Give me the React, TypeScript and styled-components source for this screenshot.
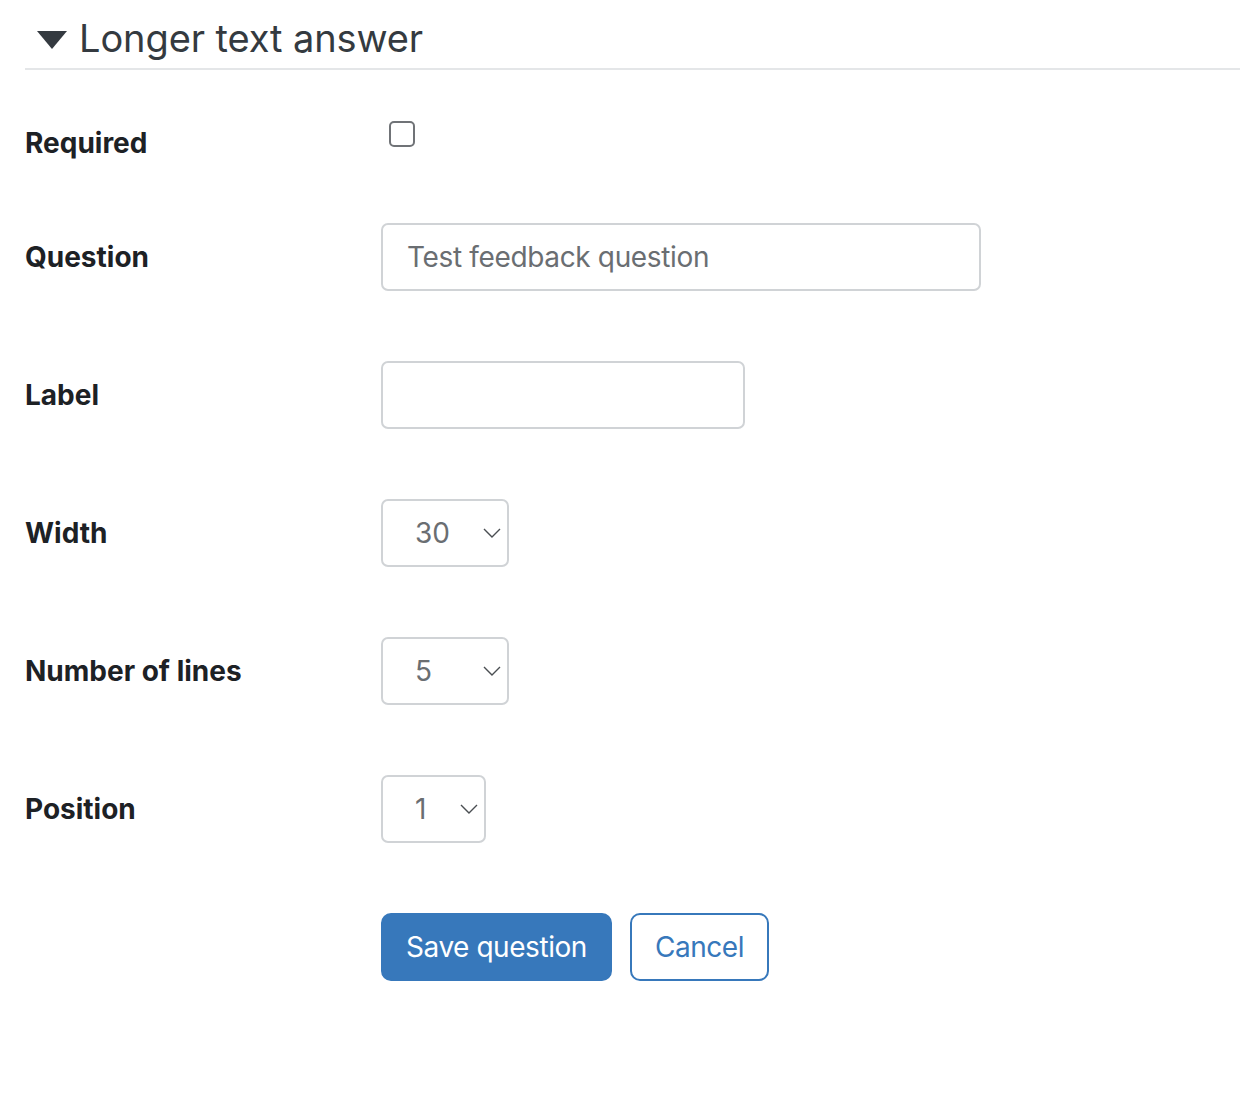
import styled, { createGlobalStyle } from "styled-components";

const GlobalStyle = createGlobalStyle`
  html, body {
    margin: 0;
    padding: 0;
    background: #fff;
  }
  body {
    font-family: Inter, Roboto, "Liberation Sans", sans-serif;
    color: #1d2125;
  }
`;

// ── Layout ────────────────────────────────────────────────

const Page = styled.div`
  padding: 14px 0 0 25px;
  width: 1215px;
`;

const Fieldset = styled.fieldset`
  margin: 0;
  padding: 0;
  border: 0;
`;

const Legend = styled.div`
  display: flex;
  align-items: center;
  gap: 12px;
  padding: 0 0 6px 12px;
  border-bottom: 2px solid #e4e6e8;
  font-size: 38px;
  line-height: 48px;
  letter-spacing: -0.1px;
  color: #343a40;
  font-weight: 400;
`;

const Caret = styled.span`
  width: 0;
  height: 0;
  border-left: 15px solid transparent;
  border-right: 15px solid transparent;
  border-top: 18px solid #343a40;
  margin-top: 4px;
`;

const Rows = styled.div`
  display: flex;
  flex-direction: column;
  padding-top: 51px;
`;

const Row = styled.div<{ $height?: number; $after?: number }>`
  display: grid;
  grid-template-columns: 356px 1fr;
  align-items: center;
  height: ${(p) => p.$height ?? 68}px;
  margin-bottom: ${(p) => p.$after ?? 70}px;
`;

const Label = styled.label`
  font-size: 28px;
  font-weight: 700;
  color: #1d2125;
`;

// ── Controls ──────────────────────────────────────────────

const CheckBox = styled.span`
  display: block;
  align-self: start;
  width: 26px;
  height: 26px;
  margin-left: 8px;
  border: 2px solid #707377;
  border-radius: 5px;
  box-sizing: border-box;
`;

const TextInput = styled.div<{ $width: number }>`
  box-sizing: border-box;
  width: ${(p) => p.$width}px;
  height: 68px;
  border: 2px solid #d0d3d6;
  border-radius: 7px;
  padding: 0 24px;
  display: flex;
  align-items: center;
  font-size: 28px;
  letter-spacing: -0.35px;
  color: #6a6e72;
`;

const Select = styled.div<{ $width: number }>`
  box-sizing: border-box;
  width: ${(p) => p.$width}px;
  height: 68px;
  border: 2px solid #d0d3d6;
  border-radius: 7px;
  padding: 0 6px 0 32px;
  display: flex;
  align-items: center;
  justify-content: space-between;
  font-size: 28px;
  color: #6a6e72;
`;

const Chevron = () => (
  <svg width="18" height="10" viewBox="0 0 18 10" fill="none">
    <path d="M1 1l8 8 8-8" stroke="#4a4e52" strokeWidth="1.4" />
  </svg>
);

const Buttons = styled.div`
  display: flex;
  gap: 18px;
`;

const Button = styled.button<{ $primary?: boolean }>`
  box-sizing: border-box;
  height: 68px;
  padding: 0 23px;
  border-radius: 10px;
  font-family: inherit;
  font-size: 28px;
  letter-spacing: -0.45px;
  border: 2px solid #3778bb;
  background: ${(p) => (p.$primary ? "#3778bb" : "#fff")};
  color: ${(p) => (p.$primary ? "#fff" : "#3778bb")};
`;

// ── Component ─────────────────────────────────────────────

export default function App() {
  return (
    <Page>
      <GlobalStyle />
      <Fieldset>
        <Legend>
          <Caret />
          <span>Longer text answer</span>
        </Legend>
        <Rows>
          <Row $height={44} $after={58}>
            <Label>Required</Label>
            <CheckBox />
          </Row>
          <Row>
            <Label>Question</Label>
            <TextInput $width={600}>Test feedback question</TextInput>
          </Row>
          <Row>
            <Label>Label</Label>
            <TextInput $width={364} />
          </Row>
          <Row>
            <Label>Width</Label>
            <Select $width={128}>
              30
              <Chevron />
            </Select>
          </Row>
          <Row>
            <Label>Number of lines</Label>
            <Select $width={128}>
              5
              <Chevron />
            </Select>
          </Row>
          <Row>
            <Label>Position</Label>
            <Select $width={105}>
              1
              <Chevron />
            </Select>
          </Row>
          <Row>
            <span />
            <Buttons>
              <Button $primary>Save question</Button>
              <Button>Cancel</Button>
            </Buttons>
          </Row>
        </Rows>
      </Fieldset>
    </Page>
  );
}
